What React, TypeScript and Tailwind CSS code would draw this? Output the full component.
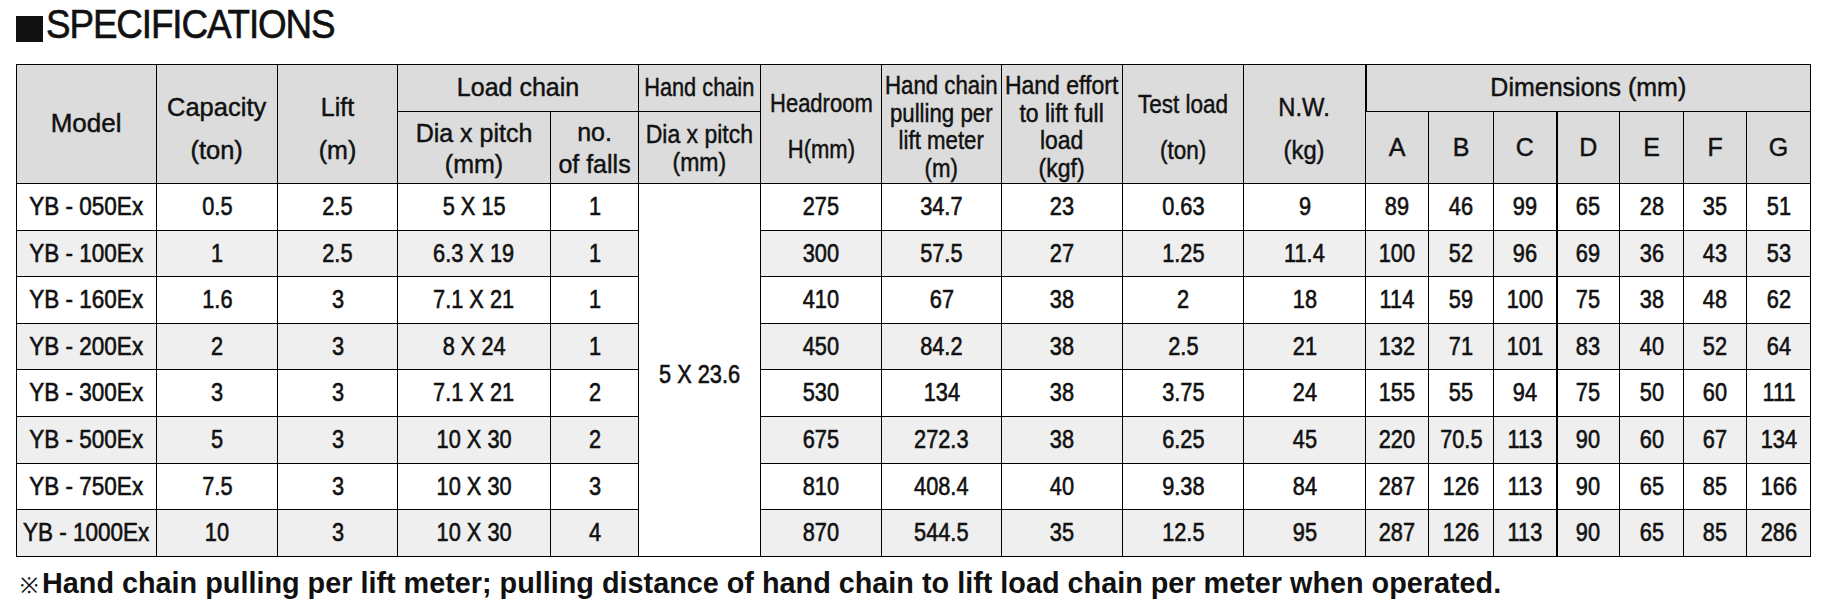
const rows = [
  ["YB - 050Ex", "0.5", "2.5", "5 X 15", "1", "275", "34.7", "23", "0.63", "9", "89", "46", "99", "65", "28", "35", "51"],
  ["YB - 100Ex", "1", "2.5", "6.3 X 19", "1", "300", "57.5", "27", "1.25", "11.4", "100", "52", "96", "69", "36", "43", "53"],
  ["YB - 160Ex", "1.6", "3", "7.1 X 21", "1", "410", "67", "38", "2", "18", "114", "59", "100", "75", "38", "48", "62"],
  ["YB - 200Ex", "2", "3", "8 X 24", "1", "450", "84.2", "38", "2.5", "21", "132", "71", "101", "83", "40", "52", "64"],
  ["YB - 300Ex", "3", "3", "7.1 X 21", "2", "530", "134", "38", "3.75", "24", "155", "55", "94", "75", "50", "60", "111"],
  ["YB - 500Ex", "5", "3", "10 X 30", "2", "675", "272.3", "38", "6.25", "45", "220", "70.5", "113", "90", "60", "67", "134"],
  ["YB - 750Ex", "7.5", "3", "10 X 30", "3", "810", "408.4", "40", "9.38", "84", "287", "126", "113", "90", "65", "85", "166"],
  ["YB - 1000Ex", "10", "3", "10 X 30", "4", "870", "544.5", "35", "12.5", "95", "287", "126", "113", "90", "65", "85", "286"],
];

const widths = [140, 121, 120, 153, 88, 122, 121, 120, 121, 121, 122, 63, 65, 63, 63, 64, 63, 64];

const th = "border border-black bg-[#dcdcdc] font-normal text-center align-middle p-0 whitespace-nowrap";
const td = "border border-black text-center align-middle p-0 whitespace-nowrap";

// the catalogue sets its text in a condensed face, so squeeze it and keep it centred
function Sq({ children, k = "scale-x-[0.87]", c = "" }: { children: React.ReactNode; k?: string; c?: string }) {
  return (
    <div className={"flex justify-center " + c}>
      <div className={"text-center " + k}>{children}</div>
    </div>
  );
}

export default function App() {
  return (
    <div className="w-[1828px] h-[612px] bg-white text-[#111] overflow-hidden font-['Liberation_Sans',Arial,sans-serif]">
      <div className="ml-4 mt-[4px] h-10 flex items-end">
        <span className="inline-block w-[27px] h-[26px] bg-[#111] mb-[2px] mr-[3px] shrink-0" />
        <h1 className="text-[40px] leading-10 tracking-[-1.2px] scale-x-[0.92] origin-left [-webkit-text-stroke:0.6px_#111]">
          SPECIFICATIONS
        </h1>
      </div>

      <table className="ml-4 mt-[20px] w-[1794px] table-fixed border-collapse">
        <colgroup>
          {widths.map((w, i) => (
            <col key={i} style={{ width: w }} />
          ))}
        </colgroup>
        <thead className="text-[25px] [-webkit-text-stroke:0.45px_#111]">
          <tr className="h-[47px]">
            <th rowSpan={2} className={th}>
              <Sq k="scale-x-[1.04]">Model</Sq>
            </th>
            <th rowSpan={2} className={th}>
              <Sq k="leading-[43px] pt-[10px] scale-x-[1.02]">Capacity<br />(ton)</Sq>
            </th>
            <th rowSpan={2} className={th}>
              <Sq k="leading-[43px] pt-[10px]">Lift<br />(m)</Sq>
            </th>
            <th colSpan={2} className={th}>Load chain</th>
            <th className={th}>
              <Sq k="scale-x-[0.87]">Hand chain</Sq>
            </th>
            <th rowSpan={2} className={th}>
              <Sq k="leading-[46px] pt-[3px] scale-x-[0.88]">Headroom<br />H(mm)</Sq>
            </th>
            <th rowSpan={2} className={th}>
              <Sq k="leading-[27.5px] pt-[6px] scale-x-[0.89]">Hand chain<br />pulling per<br />lift meter<br />(m)</Sq>
            </th>
            <th rowSpan={2} className={th}>
              <Sq k="leading-[27.5px] pt-[6px] scale-x-[0.92]">Hand effort<br />to lift full<br />load<br />(kgf)</Sq>
            </th>
            <th rowSpan={2} className={th}>
              <Sq k="leading-[46px] pt-[6px] scale-x-[0.9]">Test load<br />(ton)</Sq>
            </th>
            <th rowSpan={2} className={th}>
              <Sq k="leading-[43px] pt-[10px] scale-x-[0.95]">N.W.<br />(kg)</Sq>
            </th>
            <th colSpan={7} className={th + " border-l-2"}>Dimensions (mm)</th>
          </tr>
          <tr className="h-[72px]">
            <th className={th}>
              <Sq k="leading-[31px] pt-[3px]">Dia x pitch<br />(mm)</Sq>
            </th>
            <th className={th}>
              <Sq k="leading-[32px]">no.<br />of falls</Sq>
            </th>
            <th className={th}>
              <Sq k="leading-[28px] scale-x-[0.92]">Dia x pitch<br />(mm)</Sq>
            </th>
            {["A", "B", "C", "D", "E", "F", "G"].map((l) => (
              <th key={l} className={th + (l === "D" ? " border-l-2" : "")}>
                {l}
              </th>
            ))}
          </tr>
        </thead>
        <tbody className="text-[25px] [-webkit-text-stroke:0.6px_#111]">
          {rows.map((r, ri) => {
            const bg = ri % 2 === 1 ? "bg-[#efefef]" : "bg-white";
            return (
              <tr key={ri} className={"h-[46.6px] " + bg}>
                {r.slice(0, 5).map((c, ci) => (
                  <td key={ci} className={td}>
                    <Sq k={ci === 0 ? "scale-x-[0.9]" : "scale-x-[0.87]"}>{c}</Sq>
                  </td>
                ))}
                {ri === 0 && (
                  <td rowSpan={8} className={td + " bg-white"}>
                    <Sq c="pt-[10px]">5 X 23.6</Sq>
                  </td>
                )}
                {r.slice(5).map((c, ci) => (
                  <td key={ci + 5} className={td + (ci === 8 ? " border-l-2" : "")}>
                    <Sq>{c}</Sq>
                  </td>
                ))}
              </tr>
            );
          })}
        </tbody>
      </table>

      <p className="ml-4 mt-3 flex items-baseline text-[28.8px] leading-7 font-bold">
        <span className="font-normal text-[22px] mr-[4px] ml-[4px]">※</span>
        <span>Hand chain pulling per lift meter; pulling distance of hand chain to lift load chain per meter when operated.</span>
      </p>
    </div>
  );
}
